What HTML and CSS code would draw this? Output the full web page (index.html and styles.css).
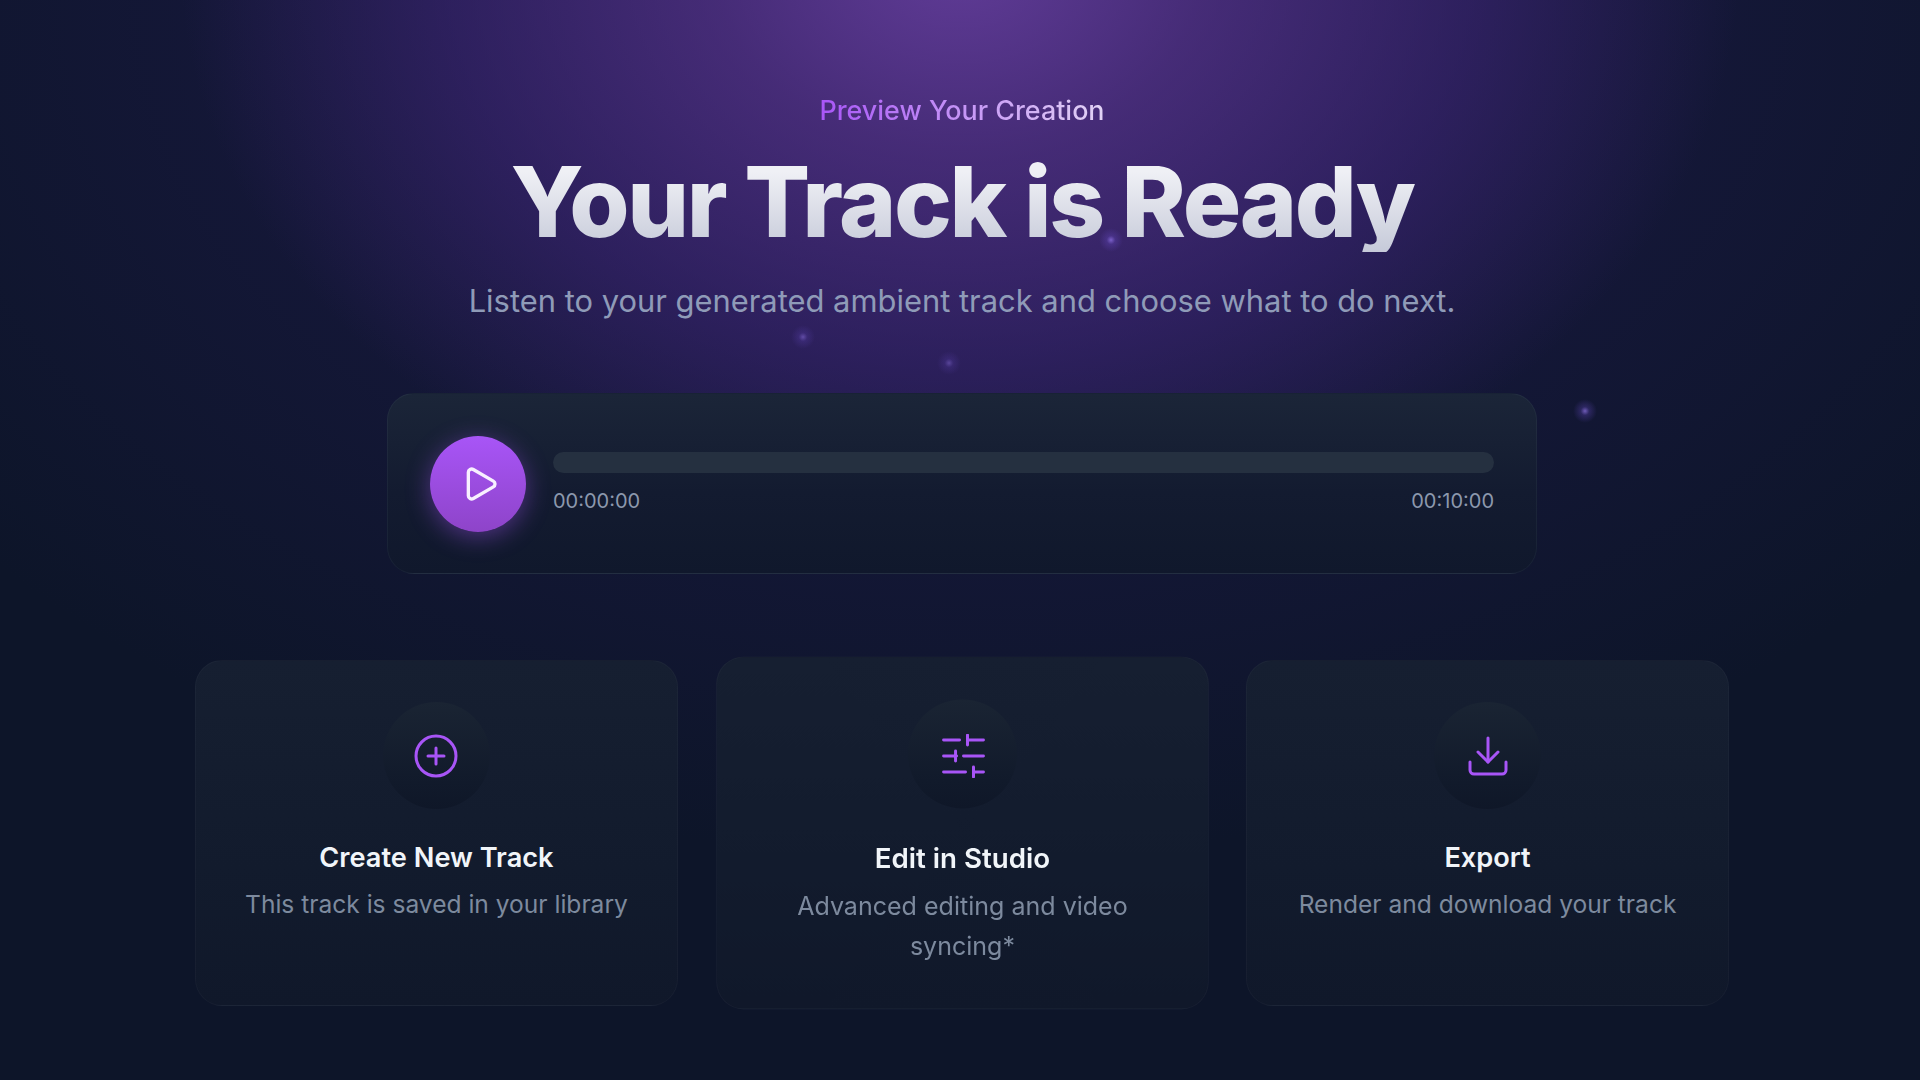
FILE: index.html
```html
<!DOCTYPE html>
<html lang="en">
<head>
    <meta charset="UTF-8">
    <title>Your Track is Ready</title>
    <link rel="stylesheet" href="styles.css">
</head>
<body>
    <span class="particle particle-a"></span>
    <span class="particle particle-b"></span>
    <span class="particle particle-c"></span>
    <span class="particle particle-d"></span>

    <main class="page">
        <header class="hero">
            <p class="eyebrow">Preview Your Creation</p>
            <h1 class="title">Your Track is Ready</h1>
            <p class="subtitle">Listen to your generated ambient track and choose what to do next.</p>
        </header>

        <section class="player">
            <button class="play-button" aria-label="Play">
                <svg class="play-icon" viewBox="0 0 24 24" fill="none" stroke="currentColor" stroke-width="2" stroke-linecap="round" stroke-linejoin="round">
                    <path d="M5 5a2 2 0 0 1 3.008-1.728l11.997 6.998a2 2 0 0 1 .003 3.458l-12 7A2 2 0 0 1 5 19z"/>
                </svg>
            </button>
            <div class="timeline">
                <div class="progress-bar"></div>
                <div class="times">
                    <span>00:00:00</span>
                    <span>00:10:00</span>
                </div>
            </div>
        </section>

        <section class="actions">
            <article class="card">
                <div class="card-icon">
                    <svg class="icon" viewBox="0 0 24 24" fill="none" stroke="currentColor" stroke-width="1.5" stroke-linecap="round" stroke-linejoin="round">
                        <circle cx="12" cy="12" r="10"/>
                        <path d="M8 12h8"/>
                        <path d="M12 8v8"/>
                    </svg>
                </div>
                <h2 class="card-title">Create New Track</h2>
                <p class="card-text">This track is saved in your library</p>
            </article>

            <article class="card card-active">
                <div class="card-icon">
                    <svg class="icon icon-sliders" viewBox="0 0 44 44" fill="none" stroke="currentColor" stroke-width="3" stroke-linecap="round" stroke-linejoin="round">
                        <path d="M2 6h16M26 6h16M26 1v10"/>
                        <path d="M2 22h13M22 22h20M14 17v10"/>
                        <path d="M2 38h22M32 38h10M32 33v10"/>
                    </svg>
                </div>
                <h2 class="card-title">Edit in Studio</h2>
                <p class="card-text">Advanced editing and video syncing*</p>
            </article>

            <article class="card">
                <div class="card-icon">
                    <svg class="icon" viewBox="0 0 24 24" fill="none" stroke="currentColor" stroke-width="1.5" stroke-linecap="round" stroke-linejoin="round">
                        <path d="M21 15v4a2 2 0 0 1-2 2H5a2 2 0 0 1-2-2v-4"/>
                        <path d="M7 10l5 5 5-5"/>
                        <path d="M12 15V3"/>
                    </svg>
                </div>
                <h2 class="card-title">Export</h2>
                <p class="card-text">Render and download your track</p>
            </article>
        </section>
    </main>
</body>
</html>
```

FILE: styles.css
```css
* {
    box-sizing: border-box;
}

html,
body {
    height: 100%;
}

body {
    margin: 0;
    overflow: hidden;
    position: relative;
    font-family: Inter, "Noto Sans", sans-serif;
    color: #f1f5f9;
    background:
        radial-gradient(ellipse 780px 600px at 50% -40px, rgba(112, 68, 168, 0.8) 0%, rgba(88, 52, 140, 0.68) 32%, rgba(62, 38, 118, 0.55) 66%, rgba(36, 26, 84, 0) 100%),
        radial-gradient(ellipse 1280px 860px at 50% 0, rgba(46, 30, 104, 0.65) 0%, rgba(30, 26, 76, 0.36) 62%, rgba(15, 23, 42, 0) 100%),
        #0d1529;
}

.page {
    width: 1534px;
    margin: 0 auto;
    padding: 94px 0 0;
    transform: translateX(2px);
}

.hero {
    text-align: center;
}

.eyebrow {
    margin: 0;
    font-size: 26.9px;
    line-height: 32px;
    font-weight: 500;
    background: linear-gradient(90deg, #a855f7 0%, #e2d4f5 100%);
    -webkit-background-clip: text;
    background-clip: text;
    color: transparent;
    width: fit-content;
    margin-inline: auto;
}

.title {
    margin: 26px 0 0;
    font-size: 97.5px;
    line-height: 100px;
    font-weight: 800;
    letter-spacing: -2.4px;
    background: linear-gradient(180deg, #eff0f5 20%, #c6cad9 100%);
    -webkit-background-clip: text;
    background-clip: text;
    color: transparent;
}

.subtitle {
    margin: 27px 0 0;
    font-size: 30.9px;
    line-height: 43px;
    color: #8f9bb8;
}

.player {
    display: flex;
    align-items: center;
    gap: 27px;
    width: 1150px;
    height: 181px;
    margin: 71px auto 0;
    padding: 0 42px;
    border: 1.5px solid rgba(148, 163, 184, 0.07);
    border-radius: 27px;
    background: linear-gradient(180deg, #1b2538 0%, #131b30 55%, #10182c 100%);
}

.play-button {
    flex: none;
    display: flex;
    align-items: center;
    justify-content: center;
    width: 96px;
    height: 96px;
    padding: 0 0 0 4px;
    border: none;
    border-radius: 50%;
    color: #f8f0ff;
    background: linear-gradient(180deg, #a855f7 0%, #8e44c9 100%);
    box-shadow: 0 5px 24px rgba(168, 85, 247, 0.42);
}

.play-icon {
    width: 40px;
    height: 40px;
}

.timeline {
    flex: 1;
}

.progress-bar {
    height: 21px;
    border-radius: 11px;
    background: #253040;
}

.times {
    display: flex;
    justify-content: space-between;
    margin-top: 15px;
    font-size: 20px;
    line-height: 27px;
    color: #8c98ad;
}

.actions {
    display: grid;
    grid-template-columns: repeat(3, 1fr);
    gap: 42.67px;
    margin-top: 86px;
}

.card {
    height: 346px;
    padding: 41px 40px 0;
    text-align: center;
    border: 1.5px solid rgba(148, 163, 184, 0.05);
    border-radius: 27px;
    background: linear-gradient(180deg, #161f31 0%, #121b2d 60%, #10182a 100%);
}

.card-active {
    transform: scale(1.02);
}

.card-icon {
    display: flex;
    align-items: center;
    justify-content: center;
    width: 107px;
    height: 107px;
    margin: 0 auto 31px;
    border-radius: 50%;
    color: #a855f7;
    background: linear-gradient(180deg, #1a2433 0%, #111a2b 75%, #0f1728 100%);
}

.icon {
    width: 48px;
    height: 48px;
}

.icon-sliders {
    width: 43px;
    height: 43px;
    margin: 3px 0 0 3px;
}

.card-title {
    margin: 0;
    font-size: 27.2px;
    line-height: 36px;
    font-weight: 600;
    color: #f1f5f9;
}

.card-text {
    margin: 8px 0 0;
    font-size: 24.55px;
    line-height: 40px;
    color: #7d8a9e;
}

.particle {
    position: absolute;
    width: 24px;
    height: 24px;
    border-radius: 50%;
    background: radial-gradient(circle, rgba(150, 120, 240, 0.7) 0%, rgba(110, 80, 210, 0.28) 25%, rgba(90, 60, 200, 0) 70%);
}

.particle-a { left: 1099px; top: 228px; }
.particle-b { left: 791px; top: 325px; opacity: 0.7; }
.particle-c { left: 937px; top: 351px; opacity: 0.6; }
.particle-d { left: 1573px; top: 399px; }
```
